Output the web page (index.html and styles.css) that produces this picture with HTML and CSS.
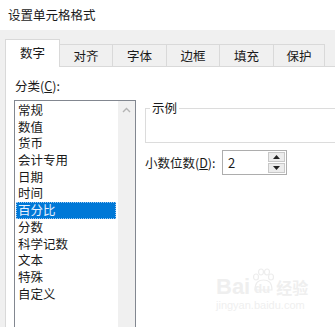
FILE: index.html
```html
<!DOCTYPE html>
<html>
<head>
    <title>设置单元格格式</title>
    <link rel="stylesheet" href="styles.css">
</head>
<body>
    <div class="title">设置单元格格式</div>

    <div class="tabs">
        <div class="tab active">数字</div>
        <div class="tab w53">对齐</div>
        <div class="tab w54">字体</div>
        <div class="tab w53">边框</div>
        <div class="tab w54">填充</div>
        <div class="tab w51">保护</div>
    </div>

    <div class="panel">
        <div class="left-col">
            <div class="label">分类(<u>C</u>):</div>
            <div class="listbox">
                <div class="items">
                    <div class="item">常规</div>
                    <div class="item">数值</div>
                    <div class="item">货币</div>
                    <div class="item">会计专用</div>
                    <div class="item">日期</div>
                    <div class="item">时间</div>
                    <div class="item selected">百分比</div>
                    <div class="item">分数</div>
                    <div class="item">科学记数</div>
                    <div class="item">文本</div>
                    <div class="item">特殊</div>
                    <div class="item">自定义</div>
                </div>
                <div class="scrollbar">
                    <svg class="scroll-up" width="9" height="6" viewBox="0 0 9 6">
                        <path d="M1 5 L4.5 1.5 L8 5" fill="none" stroke="#b4b4b4" stroke-width="1.4"/>
                    </svg>
                </div>
            </div>
        </div>

        <div class="right-col">
            <fieldset class="sample">
                <legend>示例</legend>
            </fieldset>
            <div class="decimal-row">
                <span class="decimal-label">小数位数(<u>D</u>):</span>
                <div class="spinbox">
                    <span class="spin-value">2</span>
                    <div class="spin-buttons">
                        <div class="spin-btn">
                            <svg width="7" height="4" viewBox="0 0 7 4"><path d="M0 4 L3.5 0 L7 4 Z" fill="#222"/></svg>
                        </div>
                        <div class="spin-btn">
                            <svg width="7" height="4" viewBox="0 0 7 4"><path d="M0 0 L3.5 4 L7 0 Z" fill="#222"/></svg>
                        </div>
                    </div>
                </div>
            </div>
        </div>
    </div>

    <!-- watermark -->
    <div class="watermark">
        <div class="wm-top">
            <span class="wm-bai">Bai</span>
            <span class="wm-paw">
                <svg width="26" height="26" viewBox="0 0 26 26">
                    <g fill="none" stroke="#ededed" stroke-width="1.2">
                        <ellipse cx="6" cy="9" rx="2.5" ry="3"/>
                        <ellipse cx="11" cy="4" rx="2.5" ry="3"/>
                        <ellipse cx="17" cy="4" rx="2.5" ry="3"/>
                        <ellipse cx="21" cy="9" rx="2.5" ry="3"/>
                        <path d="M5 22 C5 14 9 12 13.5 12 C18 12 22 14 22 22 Z"/>
                    </g>
                </svg>
                <span class="wm-du">du</span>
            </span>
            <span class="wm-jy">经验</span>
        </div>
        <div class="wm-url">jingyan.baidu.com</div>
    </div>
</body>
</html>
```

FILE: styles.css
```css
body {
    margin: 0;
    width: 335px;
    height: 327px;
    overflow: hidden;
    background-color: #f0f0f0;
    font-family: "Microsoft YaHei", "Noto Sans CJK SC", sans-serif;
    font-size: 12.5px;
    color: #1a1a1a;
    position: relative;
}
.title {
    height: 30px;
    line-height: 30px;
    padding-left: 8px;
    background-color: #fff;
    font-size: 12.5px;
}
.tabs {
    display: flex;
    align-items: flex-end;
    height: 36px;
    padding-left: 5px;
}
.tab {
    height: 22px;
    line-height: 21px;
    text-align: center;
    border: 1px solid #d9d9d9;
    border-left: none;
    border-bottom: none;
    background-color: #f0f0f0;
    box-sizing: border-box;
}
.tab.w53 { width: 53px; }
.tab.w54 { width: 54px; }
.tab.w51 { width: 51px; }
.tab.active {
    width: 55px;
    height: 28px;
    line-height: 26px;
    border-left: 1px solid #d9d9d9;
    background-color: #fff;
    margin-bottom: -1px;
    position: relative;
    z-index: 1;
}
.panel {
    display: flex;
    margin-left: 5px;
    height: 260px;
    background-color: #fff;
    border-left: 1px solid #d9d9d9;
    border-top: 1px solid #d9d9d9;
}
.left-col {
    padding-left: 8px;
}
.label {
    height: 33px;
    line-height: 38px;
    padding-left: 1px;
}
.listbox {
    display: flex;
    width: 120px;
    height: 230px;
    border: 1px solid #828790;
}
.items {
    width: 102px;
    padding: 1px;
    box-sizing: border-box;
}
.item {
    height: 16.7px;
    line-height: 16.7px;
    padding-left: 2px;
}
.item.selected {
    background-color: #0078d7;
    color: #e8f2ff;
    outline: 1px dotted #9cc8f0;
    outline-offset: -1px;
}
.scrollbar {
    width: 17px;
    margin-left: 1px;
    background-color: #f0f0f0;
    display: flex;
    justify-content: center;
}
.scroll-up {
    margin-top: 6px;
}
.right-col {
    padding-left: 9px;
    flex: 1;
}
.sample {
    margin: 33px -10px 0 0;
    padding: 0 0 0 4px;
    height: 41px;
    border: 1px solid #dcdcdc;
}
.sample legend {
    padding: 0 2px;
    line-height: 16px;
}
.decimal-row {
    display: flex;
    align-items: center;
    margin-top: 7px;
}
.decimal-label {
    width: 77px;
}
.spinbox {
    display: flex;
    align-items: center;
    justify-content: space-between;
    width: 65px;
    height: 25px;
    border: 1px solid #adadad;
    box-sizing: border-box;
    padding: 1px 1px 1px 5px;
}
.spin-value {
    font-size: 13px;
}
.spin-buttons {
    display: flex;
    flex-direction: column;
    width: 17px;
    height: 21px;
    gap: 1px;
}
.spin-btn {
    flex: 1;
    display: flex;
    align-items: center;
    justify-content: center;
    background-color: #ececec;
    border: 1px solid #c8c8c8;
}
.watermark {
    position: absolute;
    left: 216px;
    top: 268px;
    color: #efefef;
    font-family: "Liberation Sans", sans-serif;
}
.wm-top {
    display: flex;
    align-items: flex-end;
}
.wm-bai {
    font-size: 22px;
    font-weight: bold;
    line-height: 22px;
}
.wm-paw {
    position: relative;
    width: 26px;
    height: 30px;
}
.wm-paw svg {
    position: absolute;
    left: 0;
    top: 0;
}
.wm-du {
    position: absolute;
    left: 4px;
    top: 13px;
    font-size: 13px;
    font-weight: bold;
}
.wm-jy {
    font-family: "Noto Sans CJK SC", sans-serif;
    font-size: 16px;
    line-height: 22px;
    font-weight: bold;
}
.wm-url {
    font-size: 11px;
    margin-top: 1px;
}
```
